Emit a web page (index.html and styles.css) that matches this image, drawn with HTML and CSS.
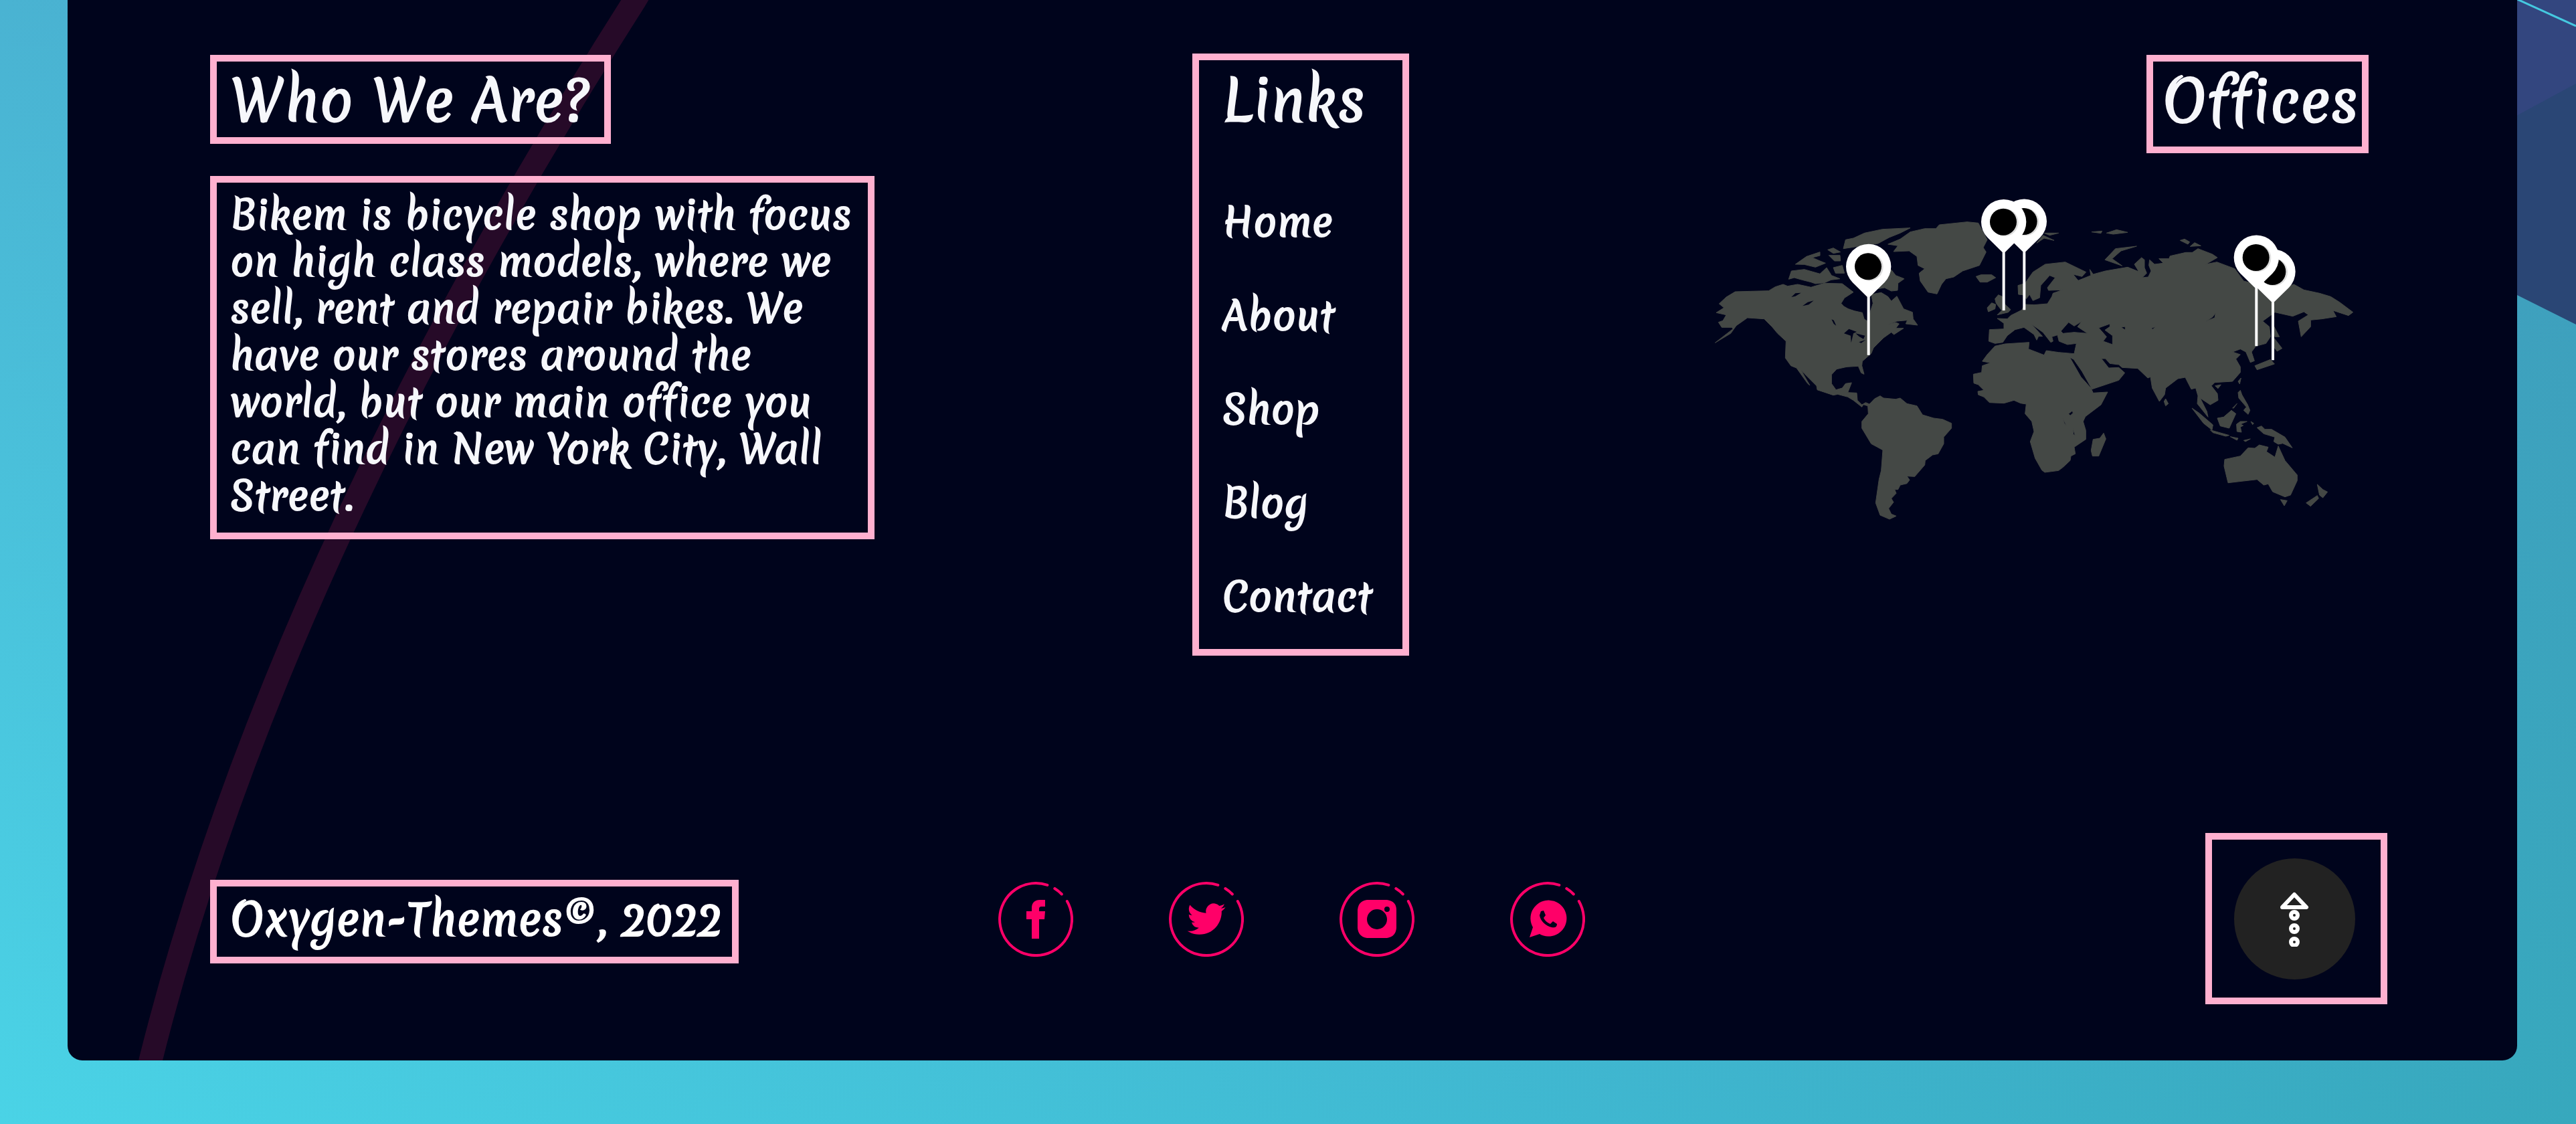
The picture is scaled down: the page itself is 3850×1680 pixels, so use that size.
FILE: index.html
```html
<!DOCTYPE html>
<html lang="en">
<head>
<meta charset="utf-8">
<title>Bikem</title>
<link rel="stylesheet" href="styles.css">
</head>
<body>
<svg class="backdrop" viewBox="0 0 100 490" aria-hidden="true">
  <path fill="#33467f" d="M0 0H100V200H0z"/>
  <path fill="#2a4675" d="M0 179L100 125V485L0 435z"/>
  <path fill="none" stroke="#45c9e0" stroke-width="3" d="M8-3L100 39"/>
</svg>
<footer class="panel">
  <svg class="swoosh" viewBox="0 0 1100 1585" preserveAspectRatio="xMinYMin slice" aria-hidden="true">
    <path d="M866 -30L848 0Q309 846 124 1585L117 1620" fill="none" stroke="#260a28" stroke-width="35"/>
  </svg>

  <div class="top">
    <section class="about">
      <h2 class="frame title title-about">Who We Are?</h2>
      <p class="frame story">Bikem is bicycle shop with focus on high class models, where we sell, rent and repair bikes. We have our stores around the world, but our main office you can find in New York City, Wall Street.</p>
    </section>

    <nav class="frame links" aria-labelledby="links-title">
      <h2 class="title" id="links-title">Links</h2>
      <ul>
        <li><a href="#home">Home</a></li>
        <li><a href="#about">About</a></li>
        <li><a href="#shop">Shop</a></li>
        <li><a href="#blog">Blog</a></li>
        <li><a href="#contact">Contact</a></li>
      </ul>
    </nav>

    <section class="offices">
      <h2 class="frame title title-offices">Offices</h2>
      <svg class="map" viewBox="60 30 2880 1470" role="img" aria-label="World map with office locations">
        <defs>
          <g id="pin">
            <path fill="#fff" d="M-6 130V-135H6V130z M0 -125L-72 -196A101 101 0 1 1 72 -196z"/>
            <circle cx="4" cy="-265" r="62" fill="#ddd"/>
            <circle cx="-2" cy="-267" r="60" fill="#000"/>
          </g>
        </defs>
        <g class="land">
          <path d="M88 522L120 492 160 468 230 466 310 464 340 446 375 435 395 443 440 435 500 448 560 430 640 432 690 470 650 496 635 520Q650 548 730 562L738 590 752 600 765 560 778 520 770 480 815 472 845 490 860 510 885 488 915 545 955 560 958 590 978 618 925 612 932 596 885 600 845 615 880 606 895 612 880 632 915 632 872 660 860 650 825 675 800 700 780 720 770 745 730 780 728 800 738 838 725 832 712 802 660 805 615 815 592 840 592 880 612 908 640 900 655 880 682 876 665 920 705 922 708 955 728 975 745 965 762 972 785 948 810 935 825 945 880 950 900 945 930 970 975 980 1000 1020 1050 1035 1090 1040 1130 1058 1130 1080 1095 1120 1095 1150 1070 1195 1045 1200 1012 1225 1010 1245 965 1297 930 1295 942 1312 930 1328 900 1335 890 1355 875 1355 882 1372 860 1395 870 1412 848 1440 860 1465 882 1474 852 1488 810 1470 790 1415 805 1310 815 1270 822 1178 770 1150 728 1080 728 1050 757 1015 755 980 735 974 728 985 690 955 665 940 620 928 600 932 528 908 525 890 470 835 455 820 495 888 485 880 435 810 410 800 385 765 388 690 350 655 325 625 290 590 215 585 165 620 140 655 70 697 150 635 145 628 100 628 85 605 105 598 120 572 75 562 110 540z"/>
          <path d="M845 255L900 232 945 200 1010 185 1060 185 1075 168 1200 155 1250 160 1290 235 1272 270 1285 290 1255 350 1180 375 1140 402 1105 410 1085 435 1065 478 1025 470 990 420 985 385 1010 365 980 350 975 310 940 285 870 288 890 262z"/>
          <path d="M400 412L412 375 470 368 540 388 570 360 592 395 630 410 590 415 560 428 520 432 500 425 460 415 425 405z"/>
          <path d="M430 345L480 310 540 290 540 306 505 315 540 330 565 340 520 358 470 346z"/>
          <path d="M575 280L600 272 632 290 600 296z M580 305L630 305 632 330 605 330z M600 360L640 350 650 385 610 385z M645 275L655 235 690 228 740 205 820 188 945 182 900 205 850 225 800 252 730 262z"/>
          <path d="M690 380L860 370 880 395 918 410 890 430 888 462 860 465 830 450 800 455 690 430z"/>
          <path d="M1240 400L1262 392 1310 392 1328 405 1290 425 1258 425z M1290 540L1310 518 1328 525 1325 545 1295 558z M1325 500L1340 482 1358 490 1370 525 1395 548 1385 560 1335 572 1355 552 1330 520z"/>
          <g transform="translate(1440 0)">
            <path fill-rule="evenodd" d="M-12 440L-10 480 10 482 25 500 40 480 55 508 85 495 90 440 130 395 155 405 120 450 125 462 188 460 145 475 140 490 120 522 60 527 20 525 5 550 -45 575 -60 590 -105 588 -75 610 -75 635 -140 638 -143 690 -115 700 -80 695 -60 665 -25 638 15 628 60 660 72 685 80 668 98 668 50 615 100 650 135 695 145 690 140 670 165 662 172 690 210 705 250 700 240 746 170 740 115 732 105 752 35 725 38 695 -70 702 -115 712 -150 750 -172 780 -135 787 -172 800 -175 830 -212 838 -210 878 -190 885 -165 910 -192 915 -190 930 -165 940 -140 965 -75 968 -30 955 0 968 25 972 20 1015 50 1050 60 1095 43 1140 65 1215 95 1268 108 1278 170 1270 190 1255 222 1225 225 1205 245 1195 240 1165 292 1130 292 1090 280 1050 290 1028 360 975 390 918 325 922 315 900 270 850 220 762 238 772 275 825 320 905 440 865 467 832 440 808 395 810 362 768 380 768 400 790 440 795 455 808 525 812 570 855 582 850 590 900 622 960 645 930 650 900 705 858 738 852 765 905 785 900 795 935 792 970 840 1030 835 1005 805 945 850 975 885 955 882 925 855 890 870 875 950 870 985 830 985 805 965 770 985 750 950 738 985 725 1010 738 1030 785 1048 778 1035 738 1055 712 1100 700 1120 670 1115 625 1085 600 1140 560 1220 578 1270 558 1290 572 1245 600 1258 670 1300 625 1300 595 1350 590 1415 580 1400 552 1470 575 1490 560 1430 515 1390 490 1340 475 1270 460 1225 435 1160 460 1000 420 960 365 880 335 830 345 882 315 860 300 795 275 770 292 740 292 670 308 665 320 620 320 640 340 600 345 578 325 575 350 585 375 572 402 545 405 565 385 555 360 555 325 542 315 510 345 530 378 480 358 380 375 325 390 310 368 315 395 258 418 235 390 275 400 293 380 200 335 110 345 55 380 20 430z
              M180 645L215 605 240 622 275 600 255 625 300 655 240 650 190 655z
              M350 630L400 612 400 625 378 640 412 665 412 705 370 690 385 670z
              M450 628L468 624 470 640z M585 632L605 624 592 637z M832 600L860 582 874 563 870 585z M215 1015L232 1002 235 1012 222 1024z M188 1035L206 1068 196 1058z M234 1080L244 1112 236 1108z"/>
            <path d="M378 325L425 275 520 264 450 285 410 320 455 352z M318 200L365 196 360 206z M385 205L430 190 480 202 415 210z M715 238L735 232 758 245 750 255z M760 265L780 248 808 262z M72 250L100 215 150 238 105 228z M105 205L170 205 130 215z"/>
            <path d="M325 1130L355 1125 372 1102 382 1128 350 1205 322 1205 316 1180z M643 960L650 948 662 970 650 980z M768 990L800 1012 862 1065 858 1088 820 1058z M850 1088L935 1112 920 1116 862 1100z M940 1118L975 1125 970 1134z M1000 1135L1030 1128 1008 1140z"/>
            <path d="M882 1035L910 1030 945 1000 965 1015 935 1080 895 1070z M970 1095L968 1062 985 1050 1015 1050 985 1062 998 1068 985 1075 990 1098z M1032 1050L1045 1058 1040 1064z M1060 1078L1080 1070 1095 1085 1125 1085 1185 1120 1218 1168 1175 1148 1155 1152 1135 1140 1140 1120 1090 1105z"/>
            <path d="M975 920L985 910 992 930 1018 975 1028 1000 1020 1018 1000 1000 1012 985 978 945z M950 990L970 970 955 990z M872 890L898 885 885 902z M975 870L988 855 982 882z"/>
            <path d="M1135 622L1160 670 1140 670z M1138 678L1172 722 1150 735 1138 720z M1050 800L1120 772 1138 792 1060 818z"/>
            <path d="M912 1250L915 1220 985 1205 1020 1168 1050 1170 1070 1155 1110 1165 1102 1185 1140 1210 1155 1160 1185 1225 1240 1290 1240 1315 1210 1380 1185 1388 1130 1365 1110 1330 1090 1335 1060 1310 990 1318 930 1325z M1165 1400L1195 1405 1182 1428z M1330 1332L1355 1355 1376 1366 1355 1392 1340 1380z M1280 1415L1330 1382 1336 1395 1300 1430z"/>
          </g>
        </g>
        <path class="water" d="M412 492L430 475 455 473 430 488z M462 532L485 515 512 508 490 526z M592 592L602 596 613 620 602 612z M648 655L670 635 705 648 690 655 680 697 678 665z M700 655L742 665 735 680 715 668z M715 694L745 684 725 698z"/>
        <g>
          <use href="#pin" x="758" y="622"/>
          <use href="#pin" x="1456" y="420"/>
          <use href="#pin" x="1364" y="422"/>
          <use href="#pin" x="2571" y="645"/>
          <use href="#pin" x="2497" y="582"/>
        </g>
      </svg>
    </section>
  </div>

  <div class="bottom">
    <p class="frame copyright">Oxygen-Themes©, 2022</p>
    <ul class="social">
      <li><a href="#facebook" aria-label="Facebook"><svg viewBox="-56 -56 112 112">
        <path class="ring" d="M17.400 -51.100A54 54 0 1 0 46.800 -27M28.300 -46A54 54 0 0 1 38.800 -37.500"/>
        <path d="M-6 29V0H-14V-12H-6V-17C-6 -25 -1 -29 6 -29H14V-19H9C6 -19 5 -18 5 -15V-12H14L13 0H5V29z"/>
      </svg></a></li>
      <li><a href="#twitter" aria-label="Twitter"><svg viewBox="-56 -56 112 112">
        <path class="ring" d="M17.400 -51.100A54 54 0 1 0 46.800 -27M28.300 -46A54 54 0 0 1 38.800 -37.500"/>
        <path transform="translate(-28.500 -29) scale(2.380)" d="M23.950 4.570a10 10 0 0 1-2.820.77 4.960 4.960 0 0 0 2.160-2.720c-.95.550-2 .95-3.120 1.180a4.920 4.920 0 0 0-8.380 4.480C7.690 8.100 4.070 6.130 1.640 3.160a4.820 4.820 0 0 0-.67 2.480c0 1.710.87 3.210 2.190 4.100a4.900 4.900 0 0 1-2.230-.62v.06a4.920 4.920 0 0 0 3.950 4.830 5 5 0 0 1-2.210.08 4.940 4.940 0 0 0 4.600 3.420A9.870 9.870 0 0 1 0 19.540a13.990 13.990 0 0 0 7.560 2.210c9.050 0 14-7.500 14-13.980 0-.21 0-.42-.02-.63a9.940 9.940 0 0 0 2.460-2.550z"/>
      </svg></a></li>
      <li><a href="#instagram" aria-label="Instagram"><svg viewBox="-56 -56 112 112">
        <path class="ring" d="M17.400 -51.100A54 54 0 1 0 46.800 -27M28.300 -46A54 54 0 0 1 38.800 -37.500"/>
        <path fill-rule="evenodd" d="M-15 -29H15Q29 -27 29 -14V13Q28 26 15 28H-15Q-28 26 -29 13V-14Q-28 -27 -15 -29z M15 0A15 15 0 1 0 -15 0A15 15 0 1 0 15 0z M19 -15A4 4 0 1 0 11 -15A4 4 0 1 0 19 -15z"/>
      </svg></a></li>
      <li><a href="#whatsapp" aria-label="WhatsApp"><svg viewBox="-56 -56 112 112">
        <path class="ring" d="M17.400 -51.100A54 54 0 1 0 46.800 -27M28.300 -46A54 54 0 0 1 38.800 -37.500"/>
        <path d="M-27 27L-22 12A27 27 0 1 1 -12 22z"/>
        <path class="phone" d="M-10 -12L-6 -13 -3 -6 -6 -2C-4 2 -1 5 4 7L8 3 14 7C14 12 10 13 6 12C-3 10 -11 2 -12 -6z"/>
      </svg></a></li>
    </ul>
    <div class="frame to-top">
      <button type="button" aria-label="Back to top">
        <svg viewBox="0 0 46 84" aria-hidden="true">
          <path d="M23 6L41 25H5z"/>
          <circle cx="23" cy="37" r="5"/><circle cx="23" cy="57" r="5"/><circle cx="23" cy="77" r="5"/>
        </svg>
      </button>
    </div>
  </div>
</footer>
</body>
</html>
```
FILE: styles.css
```css
* { box-sizing: border-box; margin: 0; padding: 0; }

body {
  position: relative;
  min-height: 100vh;
  padding: 0 88px 95px 101px;
  background:
    linear-gradient(to top, rgba(74, 147, 190, 0), rgba(74, 147, 190, .5)),
    linear-gradient(to right, #4ad3e6, #3fb7d0 62%, #37a8bd);
  color: #f6f7fb;
  font-family: Merienda, Lato, sans-serif;
  -webkit-text-stroke: 2px currentColor;
}

ul { list-style: none; }
a { color: inherit; text-decoration: none; }

.backdrop {
  position: absolute;
  top: 0;
  right: 0;
  width: 100px;
  height: 490px;
}

.panel {
  position: relative;
  display: flex;
  flex-direction: column;
  gap: 265px;
  padding: 80px 194px 84px 213px;
  overflow: hidden;
  border-radius: 0 0 22px 22px;
  background: #00041c;
}

.swoosh {
  position: absolute;
  top: 0;
  left: 0;
  height: 100%;
}

.frame { border: 10px solid #ffb0cf; }

.top, .bottom {
  position: relative;
  display: grid;
  grid-template-columns: 1fr auto 1fr;
}

.title {
  font-size: 83px;
  line-height: 120px;
  font-weight: 400;
  white-space: nowrap;
}

.about {
  display: flex;
  flex-direction: column;
  align-items: flex-start;
  gap: 48px;
  padding-top: 2px;
}

.title-about { width: 599px; height: 133px; padding-left: 20px; line-height: 116px; }

.story {
  width: 993px;
  padding: 13px 16px 20px 20px;
  font-size: 58px;
  line-height: 70px;
}

.links {
  width: 324px;
  height: 900px;
  margin-left: 6px;
  padding-left: 35px;
}

.links ul { margin-top: 52px; }
.links li { font-size: 58px; line-height: 140px; }

.offices {
  display: flex;
  flex-direction: column;
  align-items: flex-end;
  gap: 61px;
  padding: 2px 28px 0 0;
}

.title-offices { width: 332px; height: 147px; padding-left: 14px; line-height: 118px; }

.map { width: 960px; height: 490px; margin-right: 20px; }
.land { fill: #444845; stroke: #444845; stroke-width: 3; stroke-linejoin: round; }
.water { fill: #00041c; }

.bottom { align-items: center; }

.copyright {
  justify-self: start;
  width: 790px;
  height: 125px;
  margin-top: 8px;
  padding-left: 20px;
  color: #fff;
  font-size: 64px;
  line-height: 98px;
  white-space: nowrap;
}

.social { display: flex; gap: 143px; padding: 2px 22px 0 0; }
.social a, .social svg { display: block; width: 112px; height: 112px; }
.social svg { fill: #ff0068; }
.social .ring { fill: none; stroke: #ff0068; stroke-width: 4; stroke-linecap: round; }
.social .phone { fill: #00041c; }

.to-top {
  justify-self: end;
  display: grid;
  place-items: center;
  width: 272px;
  height: 256px;
  padding-right: 6px;
}

.to-top button {
  display: grid;
  place-items: center;
  width: 181px;
  height: 181px;
  border: 0;
  border-radius: 50%;
  background: #222;
}

.to-top svg { width: 46px; height: 84px; fill: none; stroke: #fff; stroke-width: 6; stroke-linejoin: round; }
```
